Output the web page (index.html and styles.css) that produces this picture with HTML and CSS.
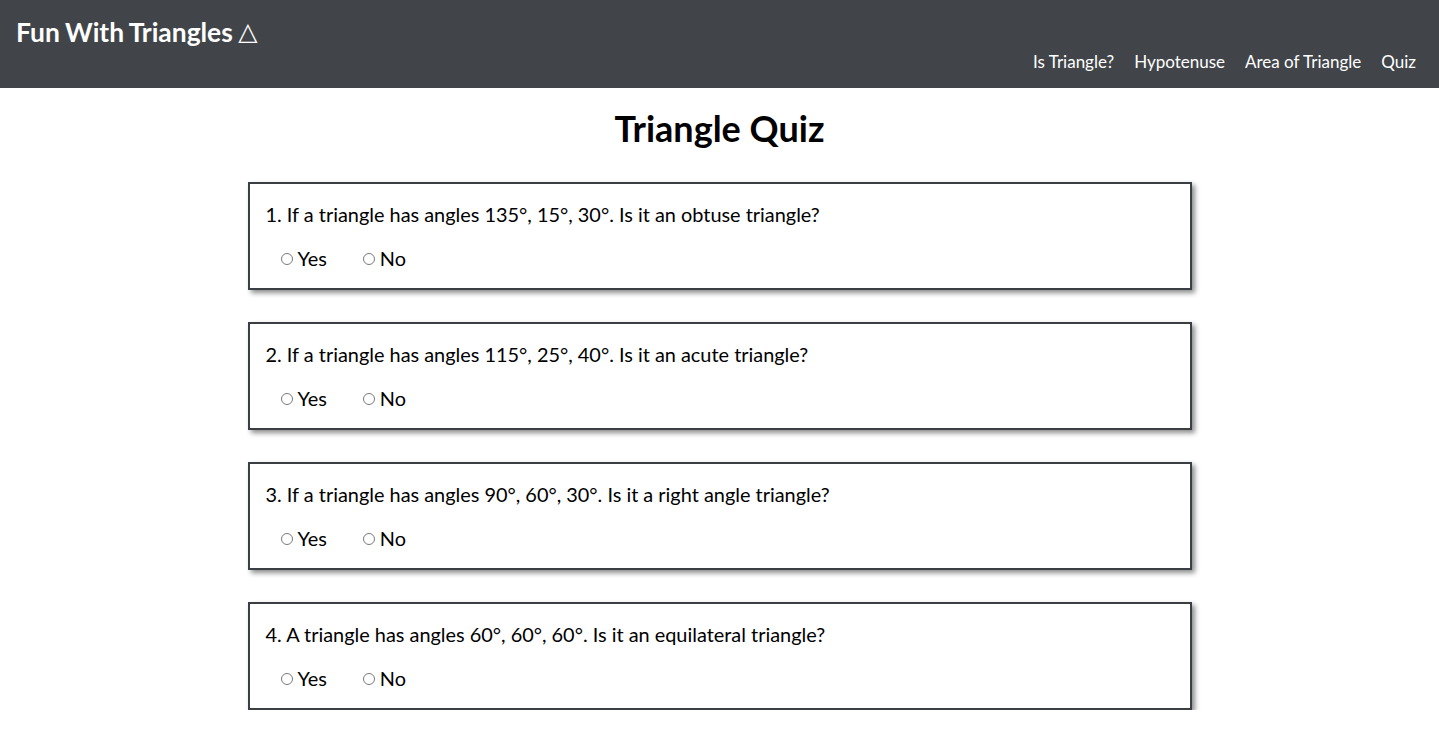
FILE: index.html
```html
<!DOCTYPE html>
<html lang="en">
<head>
<meta charset="utf-8">
<title>Triangle Quiz</title>
<link rel="stylesheet" href="styles.css">
</head>
<body>
<header class="topbar">
  <div class="brand">Fun With Triangles <span class="tri">△</span></div>
  <nav class="nav">
    <a href="#">Is Triangle?</a>
    <a href="#">Hypotenuse</a>
    <a href="#">Area of Triangle</a>
    <a href="#">Quiz</a>
  </nav>
</header>
<main class="main">
  <h1 class="title">Triangle Quiz</h1>
  <form class="quiz">
    <div class="card">
      <p class="question">1. If a triangle has angles 135°, 15°, 30°. Is it an obtuse triangle?</p>
      <div class="options">
        <label class="opt"><input type="radio" name="q1">Yes</label>
        <label class="opt"><input type="radio" name="q1">No</label>
      </div>
    </div>
    <div class="card">
      <p class="question">2. If a triangle has angles 115°, 25°, 40°. Is it an acute triangle?</p>
      <div class="options">
        <label class="opt"><input type="radio" name="q2">Yes</label>
        <label class="opt"><input type="radio" name="q2">No</label>
      </div>
    </div>
    <div class="card">
      <p class="question">3. If a triangle has angles 90°, 60°, 30°. Is it a right angle triangle?</p>
      <div class="options">
        <label class="opt"><input type="radio" name="q3">Yes</label>
        <label class="opt"><input type="radio" name="q3">No</label>
      </div>
    </div>
    <div class="card">
      <p class="question">4. A triangle has angles 60°, 60°, 60°. Is it an equilateral triangle?</p>
      <div class="options">
        <label class="opt"><input type="radio" name="q4">Yes</label>
        <label class="opt"><input type="radio" name="q4">No</label>
      </div>
    </div>
  </form>
</main>
</body>
</html>
```

FILE: styles.css
```css
* { box-sizing: border-box; }
body {
  margin: 0;
  font-family: Lato, "Noto Sans", sans-serif;
  color: #000;
  background: #fff;
}
.topbar {
  height: 88px;
  background: #414549;
  display: flex;
  justify-content: space-between;
  padding: 0 23px 0 16px;
}
.brand {
  align-self: flex-start;
  color: #fff;
  font-weight: 700;
  font-size: 26.4px;
  line-height: 32px;
  padding-top: 16px;
  word-spacing: -1px;
}
.tri {
  font-weight: 400;
  font-family: "DejaVu Sans", sans-serif;
  font-size: 25px;
  position: relative;
  top: -2px;
}
.nav {
  align-self: flex-end;
  display: flex;
  gap: 20px;
  padding-bottom: 15px;
}
.nav a {
  color: #fff;
  text-decoration: none;
  font-size: 17px;
  line-height: 22px;
}
.main { padding-top: 19px; }
.title {
  margin: 0 0 33px;
  text-align: center;
  font-size: 36px;
  line-height: 42px;
  font-weight: 700;
}
.quiz {
  width: 944px;
  margin: 0 auto;
  display: flex;
  flex-direction: column;
  gap: 32px;
}
.card {
  border: 2px solid #3b3f43;
  box-shadow: 3px 3px 5px rgba(0,0,0,0.45);
  padding: 15px 17px 15px 16px;
  background: #fff;
}
.question {
  margin: 0 0 14px;
  font-size: 19.9px;
  line-height: 30px;
}
.options {
  display: flex;
  gap: 36px;
  padding-left: 15px;
  font-size: 19.9px;
  line-height: 30px;
}
.opt { display: flex; align-items: center; gap: 5px; }
.opt input {
  appearance: none;
  -webkit-appearance: none;
  margin: 2px 0 0;
  width: 12px;
  height: 12px;
  border: 1px solid #7a7a7a;
  border-radius: 50%;
  background: #fff;
}
```
